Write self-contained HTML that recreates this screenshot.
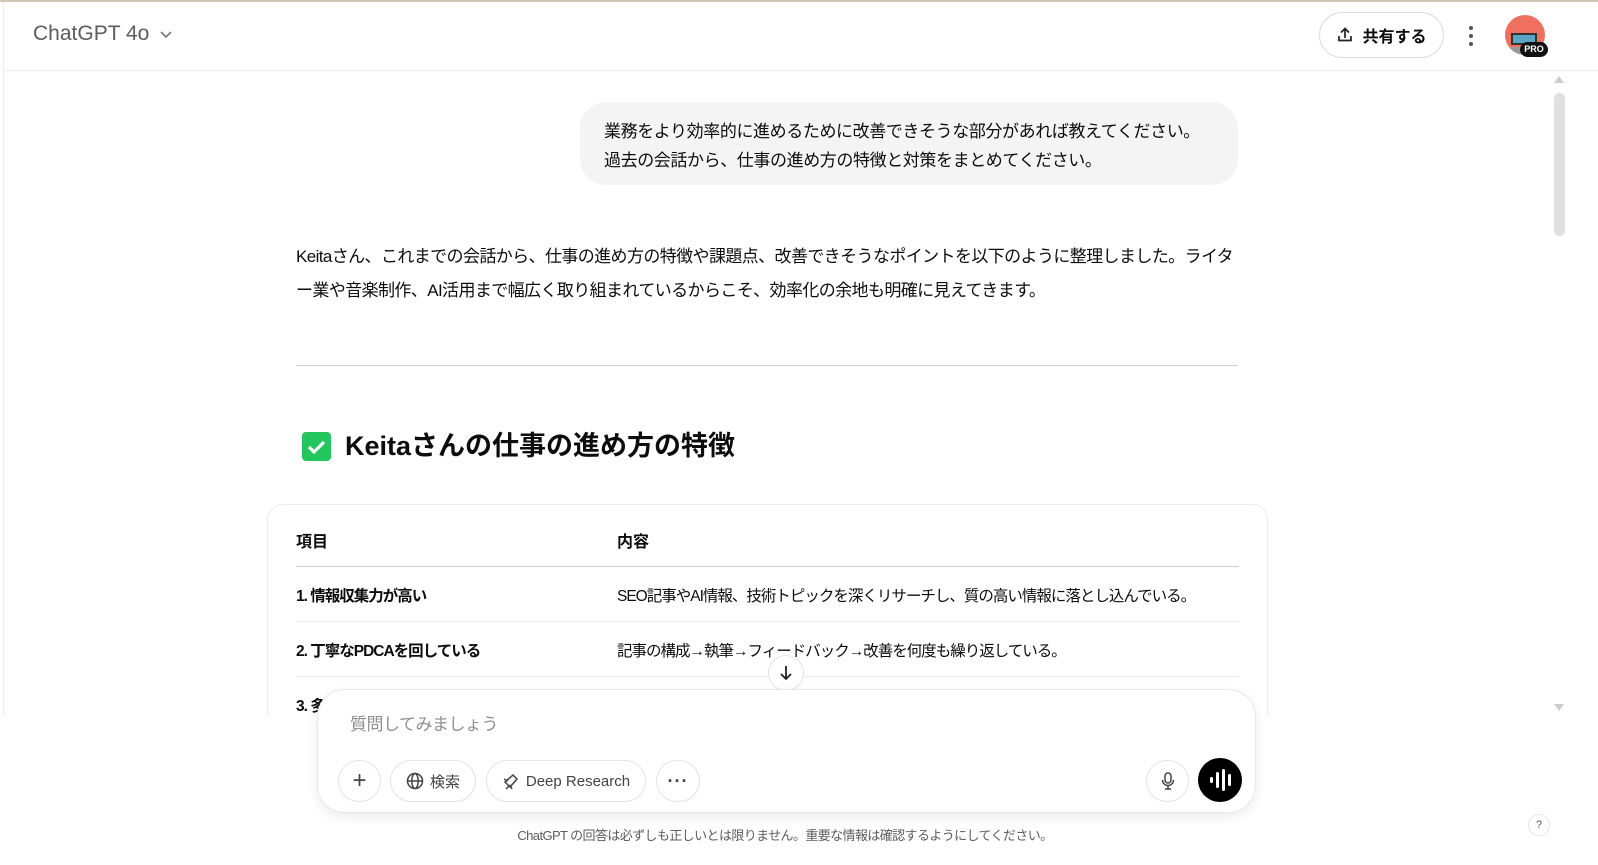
<!DOCTYPE html>
<html><head><meta charset="utf-8"><style>
*{box-sizing:border-box;margin:0;padding:0}
body{width:1598px;height:865px;overflow:hidden;background:#fff;font-family:"Liberation Sans","Noto Sans CJK JP",sans-serif;color:#0d0d0d;position:relative}
.abs{position:absolute}
.topline{left:0;top:0;width:1598px;height:2px;background:#cfc9b4}
.leftline{left:3px;top:2px;width:1px;height:863px;background:#ececec}
.hdr{left:4px;top:70px;width:1594px;height:1px;background:#ececec}
.t{white-space:nowrap}
.bubble{left:580px;top:102px;width:658px;height:83px;background:#f4f4f4;border-radius:26px;padding:15px 24px;font-size:17px;line-height:29px;letter-spacing:-0.4px}
.para{left:296px;top:240px;width:960px;font-size:17px;line-height:34px;letter-spacing:-0.6px;white-space:nowrap}
.btn{border:1px solid #e3e3e3;border-radius:22px;height:42px;top:760px;display:flex;align-items:center;justify-content:center;font-size:15px;color:#444;gap:6px}
.cell{font-size:15.5px;letter-spacing:-1px}
</style></head><body>
<div class="abs topline"></div>
<div class="abs leftline"></div>
<div class="abs hdr"></div>
<div class="abs t" style="left:33px;top:22px;font-size:21px;color:#5d5d5d">ChatGPT 4o <svg width="14" height="10" viewBox="0 0 14 10" style="margin-left:4px"><path d="M2 2l5 5 5-5" fill="none" stroke="#777" stroke-width="1.6"/></svg></div>
<div class="abs" style="left:1319px;top:12px;width:125px;height:46px;border:1px solid #ddd;border-radius:23px;display:flex;align-items:center;justify-content:center;gap:8px;font-size:16px;font-weight:bold">
<svg width="18" height="18" viewBox="0 0 18 18"><path d="M9 12V3M5 6.5L9 2.5l4 4M3 10v4.5h12V10" fill="none" stroke="#222" stroke-width="1.7"/></svg>共有する</div>
<div class="abs" style="left:1469px;top:26px;width:5px;height:20px"><div style="width:4px;height:4px;background:#555;border-radius:50%;margin-bottom:4px"></div><div style="width:4px;height:4px;background:#555;border-radius:50%;margin-bottom:4px"></div><div style="width:4px;height:4px;background:#555;border-radius:50%"></div></div>
<div class="abs" style="left:1505px;top:15px;width:40px;height:40px;border-radius:50%;background:#f07060;overflow:hidden"><div style="position:absolute;left:6px;top:18px;width:26px;height:12px;background:#5ba5c6;border:2px solid #333"></div><div style="position:absolute;left:0;top:32px;width:40px;height:10px;background:#999"></div></div>
<div class="abs" style="left:1520px;top:42px;width:28px;height:15px;background:#111;border-radius:8px;color:#fff;font-size:9px;font-weight:bold;text-align:center;line-height:15px">PRO</div>
<div class="abs" style="left:1554px;top:76px;width:0;height:0;border-left:5px solid transparent;border-right:5px solid transparent;border-bottom:7px solid #ccc"></div>
<div class="abs" style="left:1554px;top:93px;width:11px;height:143px;background:#e0e0e0;border-radius:6px"></div>
<div class="abs" style="left:1554px;top:704px;width:0;height:0;border-left:5px solid transparent;border-right:5px solid transparent;border-top:7px solid #ccc"></div>

<div class="abs bubble t">業務をより効率的に進めるために改善できそうな部分があれば教えてください。<br>過去の会話から、仕事の進め方の特徴と対策をまとめてください。</div>
<div class="abs para">Keitaさん、これまでの会話から、仕事の進め方の特徴や課題点、改善できそうなポイントを以下のように整理しました。ライタ<br>ー業や音楽制作、AI活用まで幅広く取り組まれているからこそ、効率化の余地も明確に見えてきます。</div>
<div class="abs" style="left:296px;top:365px;width:942px;height:1px;background:#cfcfcf"></div>
<div class="abs" style="left:302px;top:432px;width:29px;height:29px;background:#22c55e;border-radius:4px"><svg width="29" height="29" viewBox="0 0 29 29"><path d="M7 15l5 5 10-10" fill="none" stroke="#fff" stroke-width="3.2"/></svg></div>
<div class="abs t" style="left:345px;top:426px;font-size:27px;font-weight:bold;line-height:40px">Keitaさんの仕事の進め方の特徴</div>

<div class="abs" style="left:267px;top:504px;width:1001px;height:240px;border:1px solid #ececec;border-radius:16px;border-bottom:none"></div>
<div class="abs t" style="left:296px;top:528px;font-size:16px;font-weight:bold">項目</div>
<div class="abs t" style="left:617px;top:528px;font-size:16px;font-weight:bold">内容</div>
<div class="abs" style="left:296px;top:566px;width:943px;height:1px;background:#d0d0d0"></div>
<div class="abs t cell" style="left:296px;top:584px;font-weight:bold">1. 情報収集力が高い</div>
<div class="abs t cell" style="left:617px;top:584px">SEO記事やAI情報、技術トピックを深くリサーチし、質の高い情報に落とし込んでいる。</div>
<div class="abs" style="left:296px;top:621px;width:943px;height:1px;background:#ececec"></div>
<div class="abs t cell" style="left:296px;top:639px;font-weight:bold">2. 丁寧なPDCAを回している</div>
<div class="abs t cell" style="left:617px;top:639px">記事の構成→執筆→フィードバック→改善を何度も繰り返している。</div>
<div class="abs" style="left:296px;top:676px;width:943px;height:1px;background:#ececec"></div>
<div class="abs t cell" style="left:296px;top:694px;font-weight:bold">3. 多</div>
<div class="abs" style="left:0;top:716px;width:1550px;height:149px;background:#fff"></div>

<div class="abs" style="left:768px;top:655px;width:36px;height:36px;border-radius:50%;background:#fff;border:1px solid #e5e5e5;display:flex;align-items:center;justify-content:center"><svg width="16" height="18" viewBox="0 0 16 18"><path d="M8 2v13M3 10l5 5 5-5" fill="none" stroke="#222" stroke-width="1.8"/></svg></div>

<div class="abs" style="left:317px;top:689px;width:939px;height:124px;border-radius:28px;background:#fff;border:1px solid #e8e8e8;box-shadow:0 4px 12px rgba(0,0,0,0.08)"></div>
<div class="abs t" style="left:350px;top:710px;font-size:17px;color:#8f8f8f;letter-spacing:-0.5px">質問してみましょう</div>
<div class="abs btn" style="left:338px;width:43px;font-size:24px;color:#444;font-weight:300">+</div>
<div class="abs btn" style="left:390px;width:86px"><svg width="18" height="18" viewBox="0 0 18 18"><circle cx="9" cy="9" r="7.5" fill="none" stroke="#444" stroke-width="1.5"/><ellipse cx="9" cy="9" rx="3.2" ry="7.5" fill="none" stroke="#444" stroke-width="1.5"/><path d="M1.5 9h15" stroke="#444" stroke-width="1.5"/></svg>検索</div>
<div class="abs btn" style="left:486px;width:160px"><svg width="18" height="18" viewBox="0 0 18 18"><path d="M3 10l8-7 4 4-7 8zM8 13l-4 4M8 13l2 4M6 9L2 7" fill="none" stroke="#444" stroke-width="1.5"/></svg>Deep Research</div>
<div class="abs btn" style="left:656px;width:44px;font-size:18px;font-weight:bold;letter-spacing:1px">···</div>
<div class="abs btn" style="left:1146px;width:43px"><svg width="16" height="20" viewBox="0 0 16 20"><rect x="5" y="2" width="6" height="10" rx="3" fill="none" stroke="#444" stroke-width="1.5"/><path d="M2.5 9a5.5 5.5 0 0011 0M8 14.5V18M5 18h6" fill="none" stroke="#444" stroke-width="1.5"/></svg></div>
<div class="abs" style="left:1198px;top:758px;width:44px;height:44px;border-radius:50%;background:#000;display:flex;align-items:center;justify-content:center;gap:3px">
<div style="width:3px;height:6px;background:#fff;border-radius:2px"></div><div style="width:3px;height:16px;background:#fff;border-radius:2px"></div><div style="width:3px;height:22px;background:#fff;border-radius:2px"></div><div style="width:3px;height:12px;background:#fff;border-radius:2px"></div></div>
<div class="abs t" style="left:0;width:1570px;top:825px;text-align:center;font-size:13px;color:#5d5d5d;letter-spacing:-0.6px">ChatGPT の回答は必ずしも正しいとは限りません。重要な情報は確認するようにしてください。</div>
<div class="abs" style="left:1528px;top:814px;width:22px;height:22px;border-radius:50%;border:1px solid #e5e5e5;font-size:11px;color:#555;text-align:center;line-height:20px">?</div>
</body></html>
